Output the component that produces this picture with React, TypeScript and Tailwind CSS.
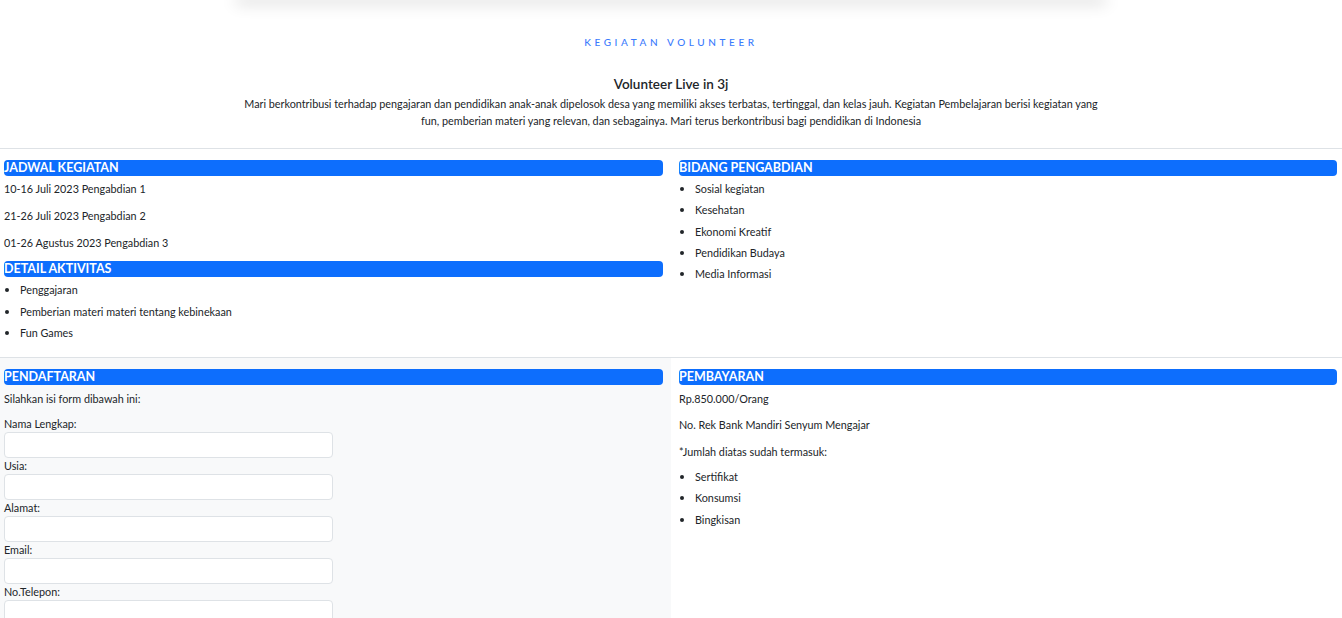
import React from 'react'

const jadwal = ["10-16 Juli 2023 Pengabdian 1", "21-26 Juli 2023 Pengabdian 2", "01-26 Agustus 2023 Pengabdian 3"];
const detail = ["Penggajaran", "Pemberian materi materi tentang kebinekaan", "Fun Games"];
const bidang = ["Sosial kegiatan", "Kesehatan", "Ekonomi Kreatif", "Pendidikan Budaya", "Media Informasi"];
const termasuk = ["Sertifikat", "Konsumsi", "Bingkisan"];
const fields = ["Nama Lengkap:", "Usia:", "Alamat:", "Email:", "No.Telepon:"];

function Bar({ title }: { title: string }) {
  return (
    <h3 className="bg-[#0d6efd] text-white font-bold text-[12.5px] leading-[16px] h-[16px] rounded-[4px] uppercase">{title}</h3>
  )
}

export default function App() {
  return (
    <div className="bg-white text-[#212529] font-['Lato','Liberation_Sans',sans-serif] text-[10.8px] min-h-[618px]">
      <div className="w-[870px] mx-auto h-[4px] -mt-[4px] bg-white shadow-[0_2px_16px_rgba(0,0,0,0.3)]"></div>

      <div className="text-center pt-[35px]">
        <p className="text-[#3a7bfd] text-[10px] leading-[14px] tracking-[0.36em] font-medium">KEGIATAN VOLUNTEER</p>
        <h2 className="mt-[26px] text-[13.5px] leading-[18px] font-semibold">Volunteer Live in 3j</h2>
        <p className="w-[866px] mx-auto mt-[2px] leading-[17px]">
          Mari berkontribusi terhadap pengajaran dan pendidikan anak-anak dipelosok desa yang memiliki akses terbatas, tertinggal, dan kelas jauh. Kegiatan Pembelajaran berisi kegiatan yang fun, pemberian materi yang relevan, dan sebagainya. Mari terus berkontribusi bagi pendidikan di Indonesia
        </p>
      </div>

      <hr className="mt-[19px] border-[#dee2e6]" />

      <div className="grid grid-cols-2">
        <div className="pl-1 pr-2 pt-[11px] pb-[13px]">
          <Bar title="Jadwal Kegiatan" />
          <div className="mt-[4px]">
            {jadwal.map((j) => (
              <p key={j} className="leading-[17px] mb-[10px]">{j}</p>
            ))}
          </div>
          <Bar title="Detail Aktivitas" />
          <ul className="list-disc pl-4 mt-[2px] marker:text-[13px]">
            {detail.map((d) => (
              <li key={d} className="leading-[21.5px]">{d}</li>
            ))}
          </ul>
        </div>
        <div className="pl-2 pr-[5px] pt-[11px]">
          <Bar title="Bidang Pengabdian" />
          <ul className="list-disc pl-4 mt-[2px] marker:text-[13px]">
            {bidang.map((b) => (
              <li key={b} className="leading-[21.3px]">{b}</li>
            ))}
          </ul>
        </div>
      </div>

      <hr className="border-[#dee2e6]" />

      <div className="grid grid-cols-2">
        <div className="bg-[#f8f9fa] pl-1 pr-2 pt-[11px] pb-4">
          <Bar title="Pendaftaran" />
          <p className="leading-[17px] mt-[5px] mb-[9px]">Silahkan isi form dibawah ini:</p>
          {fields.map((f) => (
            <div key={f}>
              <label className="block leading-[16px]">{f}</label>
              <input className="block w-[329px] h-[26px] bg-white border border-[#dee2e6] rounded-[4px]" />
            </div>
          ))}
        </div>
        <div className="pl-2 pr-[5px] pt-[11px]">
          <Bar title="Pembayaran" />
          <p className="leading-[17px] mt-[5px] mb-[9px]">Rp.850.000/Orang</p>
          <p className="leading-[17px] mb-[10px]">No. Rek Bank Mandiri Senyum Mengajar</p>
          <p className="leading-[17px] mb-[6px]">*Jumlah diatas sudah termasuk:</p>
          <ul className="list-disc pl-4 marker:text-[13px]">
            {termasuk.map((t) => (
              <li key={t} className="leading-[21.5px]">{t}</li>
            ))}
          </ul>
        </div>
      </div>
    </div>
  )
}
